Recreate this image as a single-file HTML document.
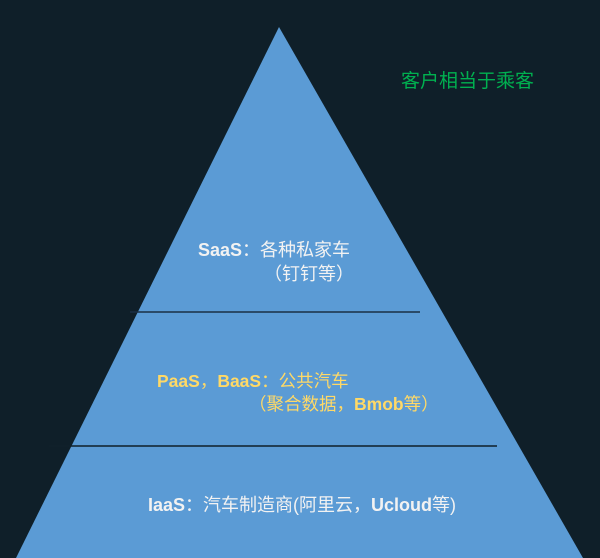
<!DOCTYPE html>
<html><head><meta charset="utf-8"><style>
html,body{margin:0;padding:0;width:600px;height:558px;overflow:hidden;background:#0f1f29;}
.t{position:absolute;white-space:nowrap;font-family:"Liberation Sans","Noto Sans CJK SC",sans-serif;font-size:17px;line-height:20px;}
.w{color:#f2f2f2}.y{color:#ffd966}
b{font-weight:bold}
</style></head><body>
<svg width="600" height="558" style="position:absolute;left:0;top:0">
<polygon points="279,27 583,558 16,558" fill="#5b9bd5"/>
<line x1="130" y1="312" x2="420" y2="312" stroke="#1a2f44" stroke-width="1.5"/>
<line x1="49" y1="446" x2="497" y2="446" stroke="#10202a" stroke-width="1.5"/>
</svg>
<div class="t" style="left:401px;top:72px;font-size:19px;color:#00b050">客户相当于乘客</div>
<div class="t w" style="left:198px;top:240px;font-size:18px"><b>SaaS</b>：各种私家车</div>
<div class="t w" style="left:264px;top:264px;font-size:18px">（钉钉等）</div>
<div class="t y" style="left:157px;top:371px;font-size:17.5px"><b>PaaS</b>，<b>BaaS</b>：公共汽车</div>
<div class="t y" style="left:249px;top:394px;font-size:17.5px">（聚合数据，<b>Bmob</b>等）</div>
<div class="t w" style="left:148px;top:495px;font-size:18px"><b>IaaS</b>：汽车制造商(阿里云，<b>Ucloud</b>等)</div>
</body></html>
